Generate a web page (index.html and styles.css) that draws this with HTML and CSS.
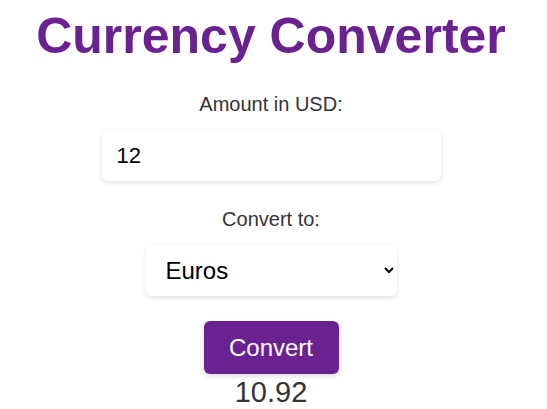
FILE: index.html
```html
<!DOCTYPE html>
<html lang="en">
<head>
<meta charset="utf-8">
<title>Currency Converter</title>
<link rel="stylesheet" href="styles.css">
</head>
<body>
<main class="converter">
  <h1 class="title">Currency Converter</h1>
  <label class="field-label" for="amount">Amount in USD:</label>
  <input class="amount-input" id="amount" type="number" value="12">
  <label class="field-label" for="currency">Convert to:</label>
  <select class="currency-select" id="currency">
    <option>Euros</option>
    <option>British Pounds</option>
    <option>Japanese Yen</option>
  </select>
  <button class="convert-button" type="button">Convert</button>
  <div class="result">10.92</div>
</main>
</body>
</html>
```

FILE: styles.css
```css
html, body {
  margin: 0;
  padding: 0;
  background: #ffffff;
}

body {
  font-family: "Liberation Sans", Arial, sans-serif;
  color: #333333;
}

.converter {
  display: flex;
  flex-direction: column;
  align-items: center;
  padding: 8px 13px 0 8px;
}

.title {
  margin: 0 0 28px;
  font-size: 50px;
  font-weight: bold;
  color: #6a2290;
  line-height: 57px;
  white-space: nowrap;
}

.field-label {
  font-size: 20px;
  line-height: 23px;
  color: #333333;
  margin-bottom: 14px;
}

.amount-input,
.currency-select {
  box-sizing: border-box;
  height: 51px;
  border: none;
  border-radius: 6px;
  background: #ffffff;
  box-shadow: 0 2px 5px rgba(0, 0, 0, 0.12);
  font-family: "Liberation Sans", Arial, sans-serif;
  color: #000000;
  outline: none;
}

.amount-input {
  width: 339px;
  padding: 0 15px;
  font-size: 22px;
  margin-bottom: 27px;
  -moz-appearance: textfield;
}

.amount-input::-webkit-outer-spin-button,
.amount-input::-webkit-inner-spin-button {
  -webkit-appearance: none;
  margin: 0;
}

.currency-select {
  width: 251px;
  padding: 0 10px 0 16px;
  font-size: 24px;
  margin-bottom: 25px;
}

.convert-button {
  box-sizing: border-box;
  width: 135px;
  height: 53px;
  border: none;
  border-radius: 6px;
  background: #6a2290;
  color: #ffffff;
  font-family: "Liberation Sans", Arial, sans-serif;
  font-size: 24px;
  box-shadow: 0 2px 5px rgba(0, 0, 0, 0.15);
  cursor: pointer;
}

.result {
  font-size: 29px;
  line-height: 33px;
  margin-top: 2px;
  color: #333333;
}
```
